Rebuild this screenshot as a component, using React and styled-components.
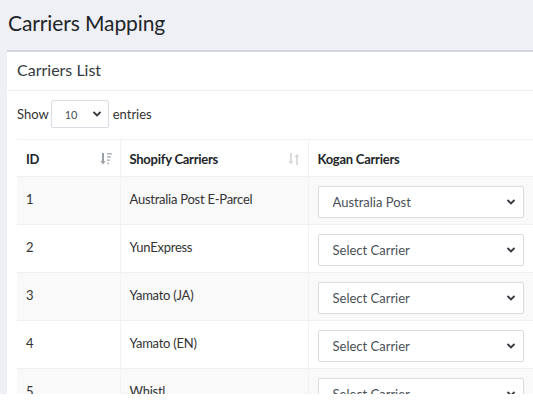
import React from 'react';
import styled, { createGlobalStyle } from 'styled-components';

const GlobalStyle = createGlobalStyle`
  body {
    margin: 0;
    background: #fff;
    font-family: Lato, "Liberation Sans", sans-serif;
    color: #212529;
  }
`;

const Page = styled.div`
  height: 394px;
  overflow: hidden;
  background: #eef0f6;
  padding-left: 7px;
`;

const Title = styled.h1`
  margin: 0;
  height: 50px;
  line-height: 46px;
  padding-left: 1px;
  font-size: 21px;
  font-weight: 400;
  letter-spacing: -0.1px;
  color: #212529;
`;

const Card = styled.div`
  background: #fff;
  border-top: 2px solid #d4d7df;
  height: 100%;
`;

const CardHeader = styled.div`
  height: 38px;
  line-height: 36px;
  padding: 0 10px;
  font-size: 16px;
  color: #343a40;
  border-bottom: 1px solid #eef0f3;
`;

const CardBody = styled.div`
  padding: 9px 0 0 10px;
`;

const LengthRow = styled.div`
  display: flex;
  align-items: center;
  font-size: 13px;
  color: #333;
  height: 28px;
`;

const SelectWrap = styled.div`
  position: relative;
  width: ${p => p.$width || '100%'};
  margin: ${p => p.$margin || '0'};
`;

const Select = styled.select`
  appearance: none;
  width: 100%;
  height: ${p => (p.$small ? '28px' : '32px')};
  padding: 0 24px 0 ${p => (p.$small ? '13px' : '14px')};
  border: 1px solid #d9dce2;
  border-radius: 2px;
  background: #fff;
  font-family: inherit;
  font-size: ${p => (p.$small ? '11px' : '13px')};
  color: #495057;
  outline: none;
`;

const Chevron = styled.svg`
  position: absolute;
  right: ${p => (p.$small ? '7px' : '8px')};
  top: 50%;
  transform: translateY(-50%);
  pointer-events: none;
`;

const Table = styled.table`
  margin-top: 11px;
  width: 516px;
  border-collapse: collapse;
  font-size: 13px;
  letter-spacing: -0.25px;
  table-layout: fixed;
`;

const Th = styled.th`
  position: relative;
  box-sizing: border-box;
  text-align: left;
  font-weight: 700;
  padding: 9px 9px 6px;
  line-height: 21px;
  width: ${p => p.$width || 'auto'};
  border-top: 1px solid #eef0f3;
  border-left: 1px solid #f1f2f4;
  &:first-child { border-left: none; }
`;

const Row = styled.tr`
  background: ${p => (p.$striped ? '#f9f9fa' : '#fff')};
  border-top: 1px solid #eef0f3;
`;

const Td = styled.td`
  vertical-align: top;
  padding: ${p => (p.$control ? '9px 9px 6px 9px' : '12px 9px 6px 9px')};
  line-height: 21px;
  color: #333;
  border-left: 1px solid #f1f2f4;
  &:first-child { border-left: none; }
`;

const SortIcon = styled.svg`
  position: absolute;
  right: ${p => p.$right};
  top: 12px;
`;

const ChevronIcon = ({ small }) => (
  <Chevron $small={small} width="10" height="7" viewBox="0 0 10 7">
    <path d="M1.5 1.5 L5 5 L8.5 1.5" fill="none" stroke="#343a40" strokeWidth="1.8" />
  </Chevron>
);

const SortDesc = () => (
  <SortIcon $right="8px" width="12" height="14" viewBox="0 0 12 14">
    <path d="M3 1 V11" stroke="#9aa0a6" strokeWidth="2" />
    <path d="M0.5 9 L3 12.5 L5.5 9 Z" fill="#9aa0a6" />
    <rect x="7" y="1" width="5" height="1.6" fill="#b7bbc0" />
    <rect x="7" y="4.2" width="4" height="1.6" fill="#b7bbc0" />
    <rect x="7" y="7.4" width="3" height="1.6" fill="#b7bbc0" />
    <rect x="7" y="10.6" width="2" height="1.6" fill="#b7bbc0" />
  </SortIcon>
);

const SortBoth = () => (
  <SortIcon $right="8px" width="12" height="14" viewBox="0 0 12 14">
    <path d="M3 1 V11" stroke="#d6d8db" strokeWidth="1.8" />
    <path d="M0.6 9 L3 12.5 L5.4 9 Z" fill="#d6d8db" />
    <path d="M9 3 V13" stroke="#d6d8db" strokeWidth="1.8" />
    <path d="M6.6 5 L9 1.5 L11.4 5 Z" fill="#d6d8db" />
  </SortIcon>
);

const rows = [
  { id: 1, shopify: 'Australia Post E-Parcel', kogan: 'Australia Post' },
  { id: 2, shopify: 'YunExpress', kogan: 'Select Carrier' },
  { id: 3, shopify: 'Yamato (JA)', kogan: 'Select Carrier' },
  { id: 4, shopify: 'Yamato (EN)', kogan: 'Select Carrier' },
  { id: 5, shopify: 'Whistl', kogan: 'Select Carrier' },
];

const App = () => (
  <>
    <GlobalStyle />
    <Page>
      <Title>Carriers Mapping</Title>
      <Card>
        <CardHeader>Carriers List</CardHeader>
        <CardBody>
          <LengthRow>
            Show
            <SelectWrap $width="58px" $margin="0 4px 0 2px">
              <Select $small defaultValue="10">
                <option>10</option>
                <option>25</option>
                <option>50</option>
              </Select>
              <ChevronIcon small />
            </SelectWrap>
            entries
          </LengthRow>
          <Table>
            <thead>
              <tr>
                <Th $width="103px">ID<SortDesc /></Th>
                <Th $width="188px">Shopify Carriers<SortBoth /></Th>
                <Th>Kogan Carriers</Th>
              </tr>
            </thead>
            <tbody>
              {rows.map((r, i) => (
                <Row key={r.id} $striped={i % 2 === 0}>
                  <Td>{r.id}</Td>
                  <Td>{r.shopify}</Td>
                  <Td $control>
                    <SelectWrap>
                      <Select defaultValue={r.kogan}>
                        <option>Select Carrier</option>
                        <option>Australia Post</option>
                      </Select>
                      <ChevronIcon />
                    </SelectWrap>
                  </Td>
                </Row>
              ))}
            </tbody>
          </Table>
        </CardBody>
      </Card>
    </Page>
  </>
);

export default App;
